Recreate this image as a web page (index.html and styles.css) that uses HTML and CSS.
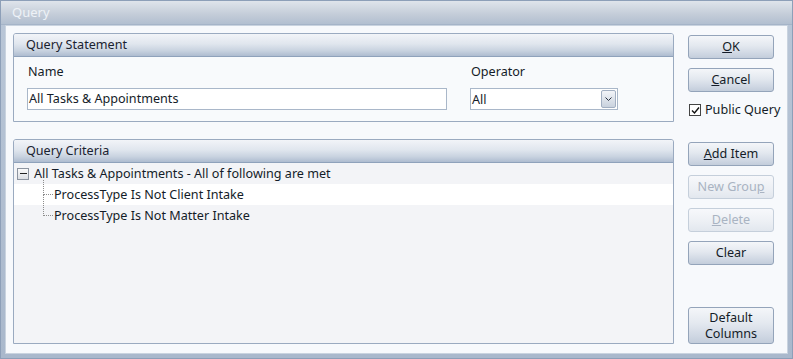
FILE: index.html
```html
<!DOCTYPE html>
<html>
<head>
<meta charset="utf-8">
<link rel="stylesheet" href="styles.css">
</head>
<body>
<div class="window">
  <div class="titlebar">Query</div>
  <div class="client">
    <div class="main">
      <section class="group stmt">
        <div class="group-head">Query Statement</div>
        <div class="stmt-body">
          <div class="field name-field">
            <label class="lbl">Name</label>
            <div class="textbox">All Tasks &amp; Appointments</div>
          </div>
          <div class="field op-field">
            <label class="lbl">Operator</label>
            <div class="combo">
              <span>All</span>
              <span class="drop">
                <svg width="7" height="5" viewBox="0 0 7 5"><path d="M0.5 0.5 L3.5 3.5 L6.5 0.5" fill="none" stroke="#2a3140" stroke-width="1"/></svg>
              </span>
            </div>
          </div>
        </div>
      </section>
      <section class="group crit">
        <div class="group-head">Query Criteria</div>
        <div class="crit-body">
          <div class="row root">
            <span class="toggle"><span class="minus"></span></span>
            <span class="txt">All Tasks &amp; Appointments - All of following are met</span>
          </div>
          <div class="row child alt">
            <span class="branch first"></span>
            <span class="txt">ProcessType Is Not Client Intake</span>
          </div>
          <div class="row child">
            <span class="branch last"></span>
            <span class="txt">ProcessType Is Not Matter Intake</span>
          </div>
        </div>
      </section>
    </div>
    <div class="side">
      <button class="btn"><u>O</u>K</button>
      <button class="btn gap9"><u>C</u>ancel</button>
      <label class="check">
        <span class="box">
          <svg width="9" height="9" viewBox="0 0 9 9"><path d="M1 4.5 L3.5 7 L8 1.5" fill="none" stroke="#111" stroke-width="1.4"/></svg>
        </span>
        <span>Public Query</span>
      </label>
      <button class="btn add"><u>A</u>dd Item</button>
      <button class="btn gap9 disabled">New Grou<u>p</u></button>
      <button class="btn gap9 disabled"><u>D</u>elete</button>
      <button class="btn gap9">Clear</button>
      <button class="btn tall">Default<br>Columns</button>
    </div>
  </div>
</div>
</body>
</html>
```
FILE: styles.css
```css
* { box-sizing: border-box; }
html, body { margin: 0; padding: 0; }
body {
  width: 793px;
  height: 359px;
  overflow: hidden;
  font-family: "Noto Sans", "Open Sans", sans-serif;
  font-size: 12.6px;
  color: #141c28;
}
.window {
  width: 793px;
  height: 359px;
  display: flex;
  flex-direction: column;
  background: linear-gradient(#b9c6d7, #a9b8cc);
  border: 1px solid #8d9fb8;
}
.titlebar {
  height: 24px;
  padding-left: 11px;
  line-height: 22px;
  color: #eef2f7;
  font-size: 13px;
  background: linear-gradient(#dfe4eb, #c3ccd8 60%, #b2bfd0);
  border-bottom: 1px solid #a5b4c8;
}
.client {
  flex: 1;
  margin: 0 4px 4px 4px;
  background: #f7f9fc;
  border: 1px solid #c9d3df;
  display: flex;
  padding: 7px 13px 9px 7px;
}
.main {
  width: 661px;
  flex: none;
  display: flex;
  flex-direction: column;
  gap: 17px;
}
.group {
  border: 1px solid #9aaac0;
  border-radius: 3px 3px 0 0;
  display: flex;
  flex-direction: column;
}
.group-head {
  height: 23px;
  line-height: 22px;
  padding-left: 12px;
  color: #1a2230;
  background: linear-gradient(#f2f4f8, #e0e6ee 45%, #c9d3e0 75%, #aebcd0);
  border-bottom: 1px solid #8fa2bb;
  border-radius: 2px 2px 0 0;
}
.stmt { height: 89px; }
.stmt-body {
  flex: 1;
  background: #f8fafc;
  display: flex;
  gap: 23px;
  padding: 7px 0 0 13px;
}
.field { display: flex; flex-direction: column; }
.lbl { line-height: 16px; padding-left: 1px; margin-bottom: 8px; }
.textbox, .combo {
  height: 22px;
  border: 1px solid #a9b7c9;
  background: #fff;
  line-height: 19px;
  padding-left: 1px;
}
.textbox { width: 420px; }
.combo {
  width: 148px;
  display: flex;
  justify-content: space-between;
  align-items: center;
  padding-right: 1px;
}
.combo span:first-child { line-height: 19px; padding-top: 1px; }
.drop {
  width: 15px;
  height: 18px;
  border: 1px solid #a2afc2;
  border-radius: 2px;
  background: linear-gradient(#f2f4f8, #c9d2de);
  display: flex;
  align-items: center;
  justify-content: center;
}
.crit { flex: 1; }
.crit-body {
  flex: 1;
  background: #f3f4f7;
}
.row {
  height: 21px;
  display: flex;
  align-items: center;
  position: relative;
}
.row.alt { background: #fff; }
.root { padding-left: 3px; }
.toggle {
  width: 12px;
  height: 12px;
  border: 1px solid #8c94a0;
  background: linear-gradient(#fafafa, #dcdfe4);
  display: flex;
  align-items: center;
  justify-content: center;
  margin-right: 5px;
}
.minus { width: 7px; height: 1px; background: #222; }
.child { padding-left: 40px; }
.branch {
  position: absolute;
  left: 29px;
  width: 10px;
  border-left: 1px dotted #8c8c8c;
  border-bottom: 1px dotted #8c8c8c;
}
.branch.first { top: -4px; height: 15px; }
.branch.last { top: -10px; height: 21px; }
.txt { white-space: nowrap; }
.side {
  margin-left: 14px;
  width: 86px;
  flex: none;
  display: flex;
  flex-direction: column;
  padding-top: 2px;
}
.btn {
  width: 86px;
  height: 24px;
  flex: none;
  font: inherit;
  color: #141c28;
  border: 1px solid #94a4ba;
  border-radius: 3px;
  background: linear-gradient(#f4f6f9, #e3e8ef 45%, #cfd7e3 80%, #c3cddb);
  padding: 0;
  line-height: 18px;
}
.btn.gap9 { margin-top: 9px; }
.btn.disabled {
  color: #a9b3c2;
  border-color: #c5cfdb;
  background: linear-gradient(#f7f8fb, #eceff4 60%, #e2e7ee);
}
.check {
  margin-top: 10px;
  height: 16px;
  display: flex;
  align-items: center;
  gap: 4px;
  padding-left: 1px;
  line-height: 16px;
  white-space: nowrap;
}
.box {
  width: 12px;
  height: 12px;
  flex: none;
  border: 1px solid #444;
  background: #fff;
  display: flex;
  align-items: center;
  justify-content: center;
}
.add { margin-top: 24px; }
.tall {
  height: 37px;
  margin-top: auto;
  line-height: 16px;
}
```
